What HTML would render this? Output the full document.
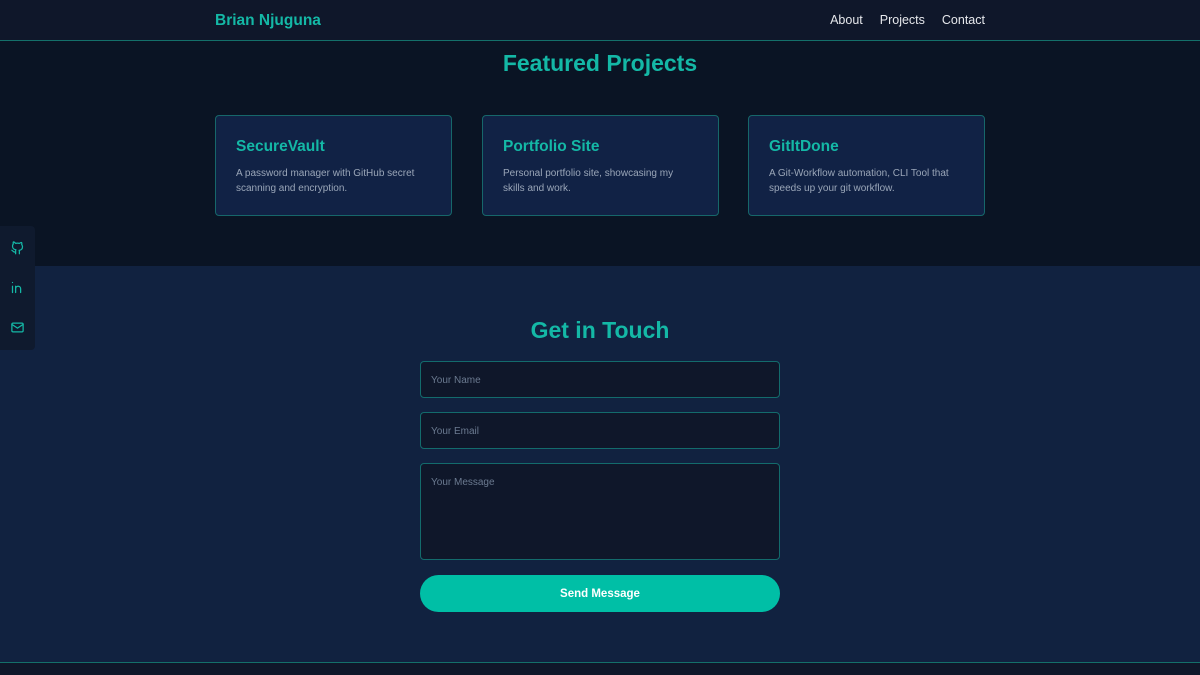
<!DOCTYPE html>
<html><head><meta charset="utf-8"><style>
*{box-sizing:border-box;margin:0;padding:0}
body{width:1200px;height:675px;overflow:hidden;background:#0a192f;font-family:"Liberation Sans","DejaVu Sans",sans-serif;position:relative}
nav{position:absolute;top:0;left:0;width:1200px;height:41px;background:#0f172a;border-bottom:1px solid #14706a}
.logo{position:absolute;left:215px;top:12px;color:#14b8a6;font-weight:bold;font-size:15.5px}
.links{position:absolute;right:215px;top:13px;font-size:12.5px;color:#e5e7eb}
.links span{margin-left:17px}
.proj{position:absolute;top:41px;left:0;width:1200px;height:225px;background:#0a1424}
h2{color:#14b8a6;font-size:23px;font-weight:bold;text-align:center;position:absolute;width:100%}
.card{position:absolute;top:74px;width:237px;height:101px;background:#112245;border:1px solid #16676a;border-radius:4px;padding:22px 30px 20px 20px}
.card h3{color:#14b8a6;font-size:15.5px;margin-bottom:10px}
.card p{color:#9aa6b8;font-size:10px;line-height:15px}
.contact{position:absolute;top:266px;left:0;width:1200px;height:396px;background:#112240}
.inp{position:absolute;left:420px;width:360px;background:#0f172a;border:1px solid #136b6c;border-radius:4px;color:#6b7a90;font-size:10px;padding:13px 10px}
.btn{position:absolute;left:420px;top:309px;width:360px;height:37px;background:#00bfa6;border-radius:19px;color:#fff;font-weight:bold;font-size:11.5px;text-align:center;line-height:38px}
footer{position:absolute;top:662px;left:0;width:1200px;height:13px;background:#0f172a;border-top:1px solid #14706a}
.side{position:absolute;left:0;top:226px;width:35px;height:124px;background:#0f1a2e;border-radius:0 4px 4px 0}
.side svg{position:absolute;left:10px}
</style></head><body>
<nav><div class="logo">Brian Njuguna</div><div class="links"><span>About</span><span>Projects</span><span>Contact</span></div></nav>
<div class="proj">
<h2 style="top:9px">Featured Projects</h2>
<div class="card" style="left:215px"><h3>SecureVault</h3><p>A password manager with GitHub secret scanning and encryption.</p></div>
<div class="card" style="left:482px"><h3>Portfolio Site</h3><p>Personal portfolio site, showcasing my skills and work.</p></div>
<div class="card" style="left:748px"><h3>GitItDone</h3><p>A Git-Workflow automation, CLI Tool that speeds up your git workflow.</p></div>
</div>
<div class="contact">
<h2 style="top:51px">Get in Touch</h2>
<div class="inp" style="top:95px;height:37px">Your Name</div>
<div class="inp" style="top:146px;height:37px">Your Email</div>
<div class="inp" style="top:197px;height:97px">Your Message</div>
<div class="btn">Send Message</div>
</div>
<footer></footer>
<div class="side">
<svg style="top:14px" width="15" height="15" viewBox="0 0 24 24" fill="none" stroke="#14b8a6" stroke-width="2" stroke-linecap="round" stroke-linejoin="round"><path d="M9 19c-4 1.5-4-2-6-2.5M15 22v-3.5c0-1 .1-1.4-.5-2 2.8-.3 5.5-1.4 5.5-6a4.6 4.6 0 0 0-1.3-3.2 4.2 4.2 0 0 0-.1-3.2s-1.1-.3-3.5 1.3a12 12 0 0 0-6.200 0C6.5 2.8 5.4 3.1 5.4 3.1a4.2 4.2 0 0 0-.1 3.2A4.6 4.6 0 0 0 4 9.5c0 4.6 2.7 5.7 5.5 6-.6.6-.6 1.2-.5 2V22"/></svg>
<svg style="top:54px" width="15" height="15" viewBox="0 0 24 24" fill="none" stroke="#14b8a6" stroke-width="2" stroke-linecap="round" stroke-linejoin="round"><path d="M4 10v10M4 4v.01M9 20v-10M9 14a4 4 0 0 1 8 0v6M17 14v6"/></svg>
<svg style="top:94px" width="15" height="15" viewBox="0 0 24 24" fill="none" stroke="#14b8a6" stroke-width="2" stroke-linecap="round" stroke-linejoin="round"><rect x="3" y="5" width="18" height="14" rx="2"/><path d="M3 7l9 6 9-6"/></svg>
</div>
</body></html>
